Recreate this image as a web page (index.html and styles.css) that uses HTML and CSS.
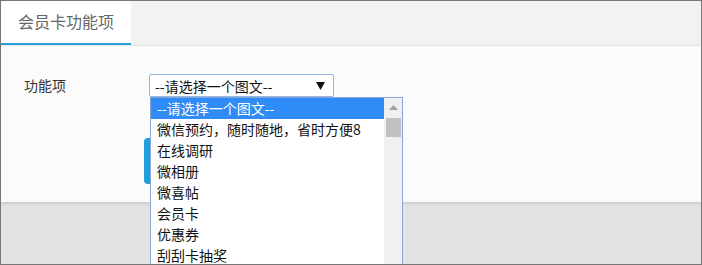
FILE: index.html
```html
<!DOCTYPE html>
<html lang="zh-CN">
<head>
<meta charset="UTF-8">
<meta name="viewport" content="width=device-width, initial-scale=1.0">
<title>会员卡功能项</title>
<link rel="stylesheet" href="styles.css">
</head>
<body>

<div class="frame">
  <div class="panel">
    <div class="tabs">
      <div class="tab active">会员卡功能项</div>
    </div>

    <div class="form">
      <div class="form-row">
        <label class="form-label">功能项</label>
        <div class="select-wrap">
          <div class="select">
            <span>--请选择一个图文--</span>
            <svg class="arrow" width="9" height="8" viewBox="0 0 9 8"><polygon points="0,0 9,0 4.5,8" fill="#111"/></svg>
          </div>

          <!-- open dropdown list -->
          <div class="dropdown">
            <ul class="options">
              <li class="selected">--请选择一个图文--</li>
              <li>微信预约，随时随地，省时方便8</li>
              <li>在线调研</li>
              <li>微相册</li>
              <li>微喜帖</li>
              <li>会员卡</li>
              <li>优惠券</li>
              <li>刮刮卡抽奖</li>
            </ul>
            <div class="scrollbar">
              <svg class="scroll-up" width="9" height="5" viewBox="0 0 9 5"><polygon points="0,5 9,5 4.5,0" fill="#a3a3a3"/></svg>
              <div class="thumb"></div>
            </div>
          </div>
        </div>
      </div>

      <!-- save button, hidden behind the open list -->
      <div class="actions">
        <button type="button" class="btn" aria-label="保存"></button>
      </div>
    </div>
  </div>
  <div class="footer"></div>
</div>

</body>
</html>
```

FILE: styles.css
```css
body {
  margin: 0;
  padding: 0;
  font-family: "Noto Sans CJK SC", "Microsoft YaHei", sans-serif;
  background-color: #fff;
}

.frame {
  position: relative;
  width: 700px;
  height: 263px;
  border: 1px solid #777;
  overflow: hidden;
  background-color: #e3e3e3;
}

.panel {
  position: relative;
  z-index: 1;
  height: 201px;
  background-color: #fbfbfb;
  box-shadow: 0 1px 4px rgba(0, 0, 0, 0.16);
}

.tabs {
  display: flex;
  height: 44px;
  background-color: #f2f2f2;
  border-bottom: 1px solid #e4e4e4;
}

.tab {
  width: 113px;
  height: 42px;
  padding-left: 17px;
  font-size: 16px;
  line-height: 40px;
  color: #666;
}

.tab.active {
  background-color: #fff;
  border-bottom: 2px solid #27a2db;
}

.form {
  padding: 28px 0 0 0;
}

.form-row {
  display: flex;
  align-items: flex-start;
}

.form-label {
  width: 125px;
  padding-left: 23px;
  font-size: 14px;
  line-height: 22px;
  color: #333;
}

.select-wrap {
  position: relative;
  z-index: 2;
}

.select {
  display: flex;
  align-items: center;
  justify-content: space-between;
  box-sizing: border-box;
  width: 185px;
  height: 23px;
  padding: 0 8px 0 5px;
  border: 1px solid #94b6e4;
  border-radius: 2px;
  background-color: #fff;
  font-size: 14px;
  color: #111;
}

.select span {
  line-height: 20px;
}

.dropdown {
  position: absolute;
  left: 1px;
  top: 100%;
  display: flex;
  width: 251px;
  border: 1px solid #88a5d6;
  background-color: #fff;
}

.options {
  flex: 1;
  margin: 0;
  padding: 0;
  list-style: none;
}

.options li {
  height: 21px;
  padding-left: 6px;
  font-size: 14px;
  line-height: 21px;
  color: #111;
  white-space: nowrap;
}

.options li.selected {
  background-color: #2f8cf6;
  color: #fff;
}

.scrollbar {
  display: flex;
  flex-direction: column;
  align-items: center;
  width: 18px;
  background-color: #f0f0f0;
}

.scroll-up {
  margin-top: 7px;
}

.thumb {
  width: 15px;
  height: 19px;
  margin-top: 8px;
  background-color: #c1c1c1;
}

.actions {
  padding: 41px 0 0 143px;
}

.btn {
  display: block;
  width: 90px;
  height: 46px;
  border: none;
  border-radius: 4px;
  background-color: #1f9fdc;
}

.footer {
  height: 62px;
}
```
